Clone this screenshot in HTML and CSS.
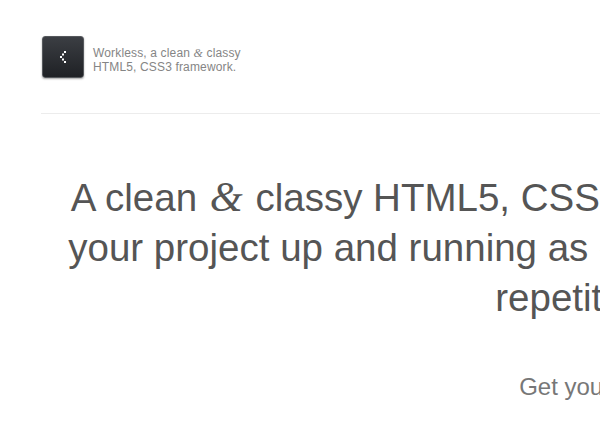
FILE: index.html
```html
<!DOCTYPE html>
<html lang="en">
<head>
<meta charset="utf-8">
<title>Workless</title>
<link rel="stylesheet" href="styles.css">
</head>
<body>
<div class="page">
  <header class="header">
    <a class="logo" href="#" aria-label="Workless">
      <svg width="6" height="12" viewBox="0 0 6 12" aria-hidden="true">
        <rect x="4" y="0" width="2" height="2" fill="#fff"/>
        <rect x="2" y="2.5" width="2" height="2" fill="#fff"/>
        <rect x="0" y="5" width="2" height="2" fill="#fff"/>
        <rect x="2" y="7.5" width="2" height="2" fill="#fff"/>
        <rect x="4" y="10" width="2" height="2" fill="#fff"/>
      </svg>
    </a>
    <p class="tagline">Workless, a clean <span class="amp">&amp;</span> classy<br>HTML5, CSS3 framework.</p>
  </header>
  <h1 class="headline">A clean <span class="amp amp-big">&amp;</span> classy HTML5, CSS3 framework that's designed to get<br>your project up and running as quickly as possible, yet without the<br>repetitive tasks.</h1>
  <p class="sub">Get your copy today.</p>
</div>
</body>
</html>
```
FILE: styles.css
```css
html, body {
  margin: 0;
  padding: 0;
  background: #fff;
  overflow: hidden;
}
body {
  font-family: "Liberation Sans", Arial, sans-serif;
}
.page {
  width: 1176px;
  padding: 36px 0 0 41px;
}
.header {
  display: flex;
  align-items: flex-start;
  gap: 8px;
  padding: 0 0 35px 1px;
  border-bottom: 1px solid #ececec;
}
.logo {
  width: 40px;
  height: 40px;
  flex: none;
  display: flex;
  align-items: center;
  justify-content: center;
  border: 1px solid #55585c;
  border-radius: 3px;
  background: linear-gradient(#3b3e43, #1f2125);
  box-shadow: 0 1px 2px rgba(0, 0, 0, 0.35);
}
.logo svg {
  display: block;
}
.tagline {
  margin: 10px 0 0 1px;
  font-size: 12px;
  line-height: 14px;
  letter-spacing: 0.15px;
  color: #858585;
}
.amp {
  font-family: "Liberation Serif", "Times New Roman", serif;
  font-style: italic;
}
.amp-big {
  font-size: 1.1em;
  margin: 0 2px;
}
.headline {
  margin: 58px 0 0 0;
  font-size: 38.5px;
  line-height: 50px;
  font-weight: normal;
  color: #555;
  text-align: center;
}
.sub {
  margin: 49px 0 0 0;
  font-size: 24px;
  line-height: 30px;
  color: #777;
  text-align: center;
}
```
